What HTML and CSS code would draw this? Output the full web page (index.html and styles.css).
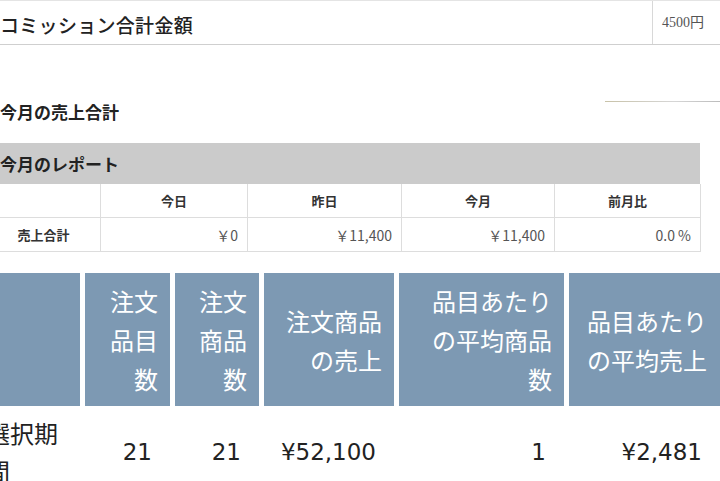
FILE: index.html
```html
<!DOCTYPE html>
<html lang="ja">

<head>
  <meta charset="UTF-8">
  <meta name="viewport" content="width=device-width, initial-scale=1.0">
  <title>売上レポート</title>
  <link rel="stylesheet" href="styles.css">
</head>

<body>
  <div class="commission">
    <div class="commission-label">コミッション合計金額</div>
    <div class="commission-value">4500円</div>
  </div>

  <div class="month">
    <h2>今月の売上合計</h2>
    <span class="month-fade"></span>
  </div>

  <div class="report">
    <div class="report-title">今月のレポート</div>
    <table class="report-table">
      <colgroup>
        <col class="c-label">
        <col class="c-today">
        <col class="c-yesterday">
        <col class="c-month">
        <col class="c-ratio">
      </colgroup>
      <tr>
        <th></th>
        <th>今日</th>
        <th>昨日</th>
        <th>今月</th>
        <th>前月比</th>
      </tr>
      <tr>
        <td class="row-label">売上合計</td>
        <td>￥0</td>
        <td>￥11,400</td>
        <td>￥11,400</td>
        <td>0.0 %</td>
      </tr>
    </table>
  </div>

  <div class="orders">
    <div class="orders-head"></div>
    <div class="orders-head">注文品目数</div>
    <div class="orders-head">注文商品数</div>
    <div class="orders-head sales">注文商品の売上</div>
    <div class="orders-head wide">品目あたりの平均商品数</div>
    <div class="orders-head last">品目あたりの平均売上</div>

    <div class="orders-cell period">選択期間</div>
    <div class="orders-cell">21</div>
    <div class="orders-cell">21</div>
    <div class="orders-cell">¥52,100</div>
    <div class="orders-cell">1</div>
    <div class="orders-cell">¥2,481</div>
  </div>
</body>

</html>
```

FILE: styles.css
```css
body {
  font-family: "Noto Sans CJK JP", sans-serif;
  background-color: #ffffff;
  margin: 0;
  padding: 0;
  width: 720px;
  overflow: hidden;
  color: #222;
}

/* Commission row */
.commission {
  display: flex;
  height: 43px;
  border-top: 1px solid #e4e4e4;
  border-bottom: 1px solid #cfcfcf;
  font-family: "Liberation Serif", "Noto Sans CJK JP", serif;
  color: #222;
}

.commission-label {
  flex: 1;
  padding-top: 8px;
  font-size: 19px;
  line-height: 35px;
  font-weight: 500;
  letter-spacing: 0.3px;
}

.commission-value {
  width: 58px;
  padding-left: 9px;
  border-left: 1px solid #d8d8d8;
  font-size: 14px;
  line-height: 44px;
  color: #555;
}

/* Monthly total */
.month {
  display: flex;
  margin-top: 55px;
}

.month h2 {
  margin: 0;
  font-size: 17px;
  line-height: 24px;
  font-weight: bold;
  color: #222;
}

.month-fade {
  margin-left: auto;
  margin-top: 1px;
  width: 115px;
  height: 1px;
  background: linear-gradient(90deg, #c8c2a8, #d6d6d6 60%, #bcbcbc);
}

/* Report box */
.report {
  margin-top: 19px;
  margin-left: -14px;
  width: 714px;
}

.report-title {
  height: 41px;
  padding-left: 14px;
  background-color: #cbcbcb;
  font-size: 17px;
  line-height: 41px;
  font-weight: bold;
  color: #222;
}

.report-table {
  width: 714px;
  table-layout: fixed;
  border-collapse: collapse;
}

.c-label { width: 114px; }
.c-today { width: 147px; }
.c-yesterday { width: 154px; }
.c-month { width: 153px; }
.c-ratio { width: 146px; }

.report-table th,
.report-table td {
  height: 33px;
  padding: 0 9px;
  border: 1px solid #dddddd;
  border-top: none;
}

.report-table th {
  font-size: 13px;
  font-weight: bold;
  text-align: center;
  color: #333;
}

.report-table td {
  font-size: 14px;
  text-align: right;
  color: #555;
}

.report-table td.row-label {
  font-size: 13px;
  font-weight: bold;
  text-align: center;
  color: #333;
}

/* Orders table */
.orders {
  display: grid;
  grid-template-columns: 100px 85px 84px 130px 165px 151px;
  gap: 5px;
  margin-top: 21px;
  margin-left: -20px;
}

.orders-head {
  display: flex;
  align-items: center;
  justify-content: flex-end;
  height: 117px;
  padding: 8px 12px 8px 8px;
  background-color: #7d99b3;
  color: #ffffff;
  font-size: 24px;
  line-height: 39px;
  text-align: right;
}

.orders-head.sales {
  padding-left: 14px;
}

.orders-head.wide {
  padding-left: 25px;
}

.orders-head.last {
  padding-left: 10px;
  padding-right: 13px;
}

.orders-cell {
  display: flex;
  align-items: center;
  justify-content: flex-end;
  height: 82px;
  padding: 0 18px 0 6px;
  font-family: "DejaVu Sans", sans-serif;
  font-size: 23px;
  line-height: 38px;
  color: #222;
}

.orders-cell.period {
  justify-content: flex-start;
  padding-right: 19px;
  font-family: "Noto Sans CJK JP", sans-serif;
  font-size: 24px;
}
```
